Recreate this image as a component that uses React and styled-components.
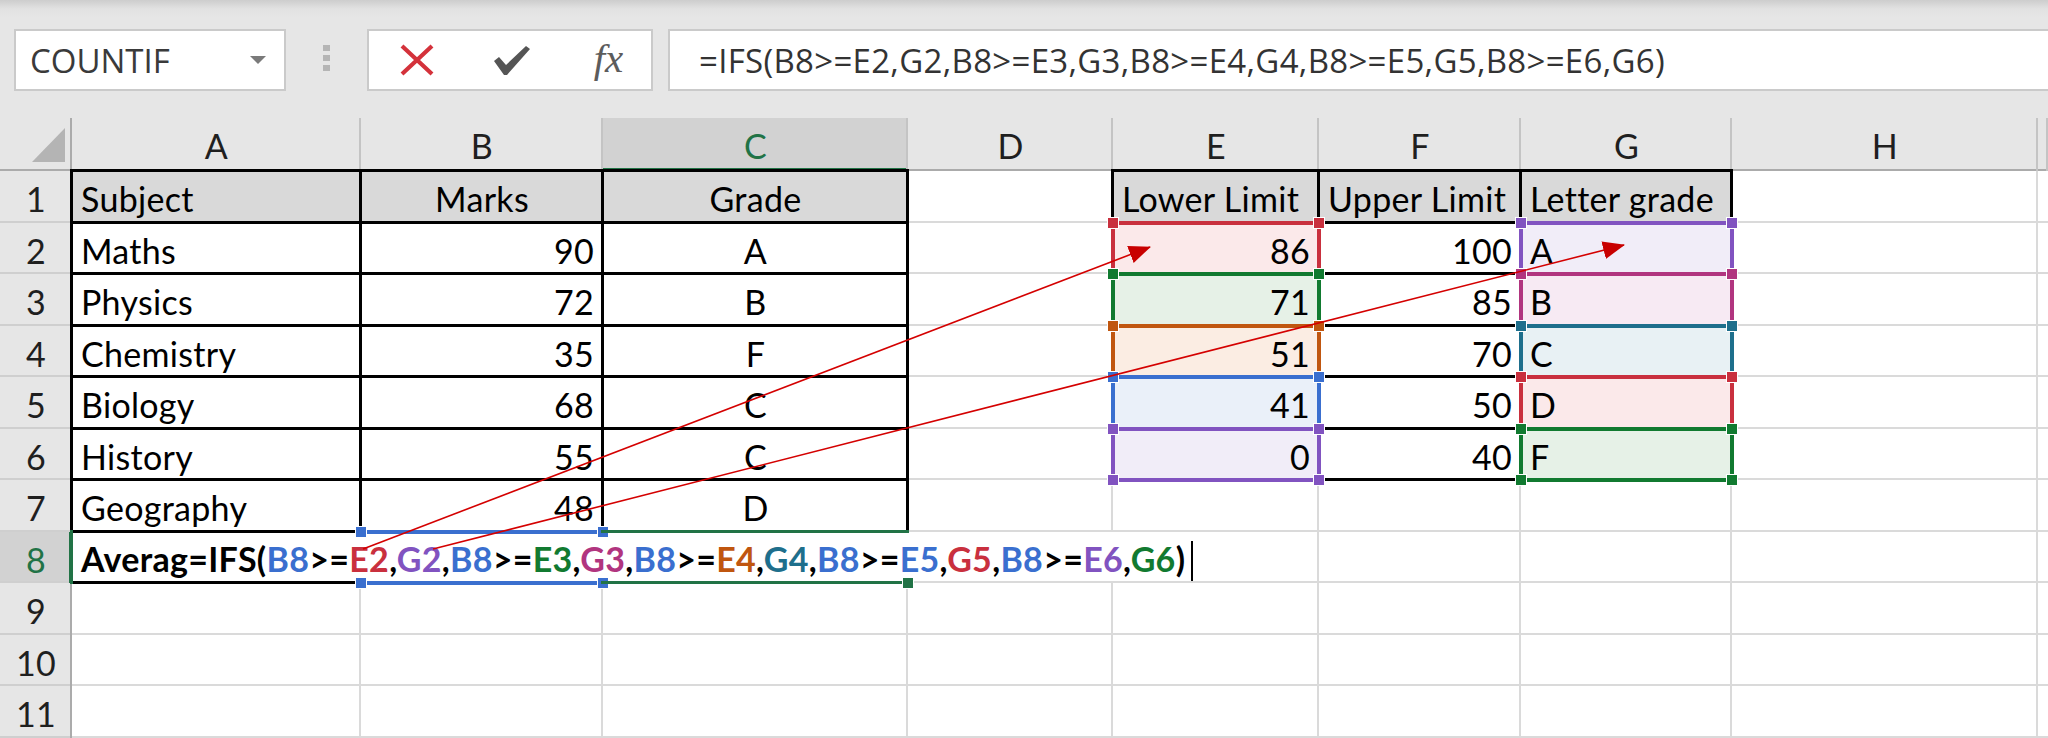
import React from 'react';
import styled, { createGlobalStyle } from 'styled-components';

const GlobalStyle = createGlobalStyle`
  html, body { margin: 0; padding: 0; background: #fff; }
  body { width: 2048px; height: 738px; overflow: hidden; font-family: Lato, "Liberation Sans", sans-serif; }
`;

const C = {
  blue: '#3a6fcf',
  red: '#c9303e',
  purple: '#8153c0',
  green: '#117a30',
  magenta: '#b1357f',
  orange: '#c0560f',
  teal: '#1e6f8c',
};
const TINT = {
  red: '#fbe9ea',
  green: '#e6f1e7',
  orange: '#fbede3',
  blue: '#eaf0f9',
  purple: '#f1edf8',
  magenta: '#f7eaf3',
  teal: '#e8f1f4',
};
const XL_GREEN = '#217346';

const Page = styled.div`
  width: 2048px;
  height: 738px;
  display: flex;
  flex-direction: column;
  overflow: hidden;
  background: #fff;
`;

const Toolbar = styled.div`
  height: 118px;
  flex: none;
  box-sizing: border-box;
  display: flex;
  align-items: flex-start;
  padding: 29px 0 0 14px;
  background: linear-gradient(#cdcdcd 0px, #e2e2e2 9px, #e6e6e6 18px);
  font-family: "Open Sans", "Noto Sans", sans-serif;
`;

const Field = styled.div`
  height: 62px;
  box-sizing: border-box;
  background: #fff;
  border: 2px solid #cacaca;
  display: flex;
  align-items: center;
`;

const NameBox = styled(Field)`
  width: 272px;
  padding: 0 18px 0 14px;
  justify-content: space-between;
  font-size: 33px;
  color: #3a3a3a;
`;

const Caret = styled.span`
  width: 0;
  height: 0;
  border-left: 8px solid transparent;
  border-right: 8px solid transparent;
  border-top: 8px solid #7a7a7a;
`;

const Grip = styled.div`
  margin: 16px 37px 0;
  display: flex;
  flex-direction: column;
  gap: 4px;
`;

const GripDot = styled.span`
  width: 7px;
  height: 6px;
  background: #b5b5b5;
`;

const ActionBox = styled(Field)`
  width: 286px;
  display: grid;
  grid-template-columns: repeat(3, 95px);
  justify-items: center;
  align-items: center;
`;

const Fx = styled.span`
  font-family: "Liberation Serif", serif;
  font-style: italic;
  font-size: 41px;
  color: #5c5c5c;
  line-height: 1;
  margin-top: -4px;
  margin-left: 4px;
`;

const FormulaBox = styled(Field)`
  flex: 1;
  margin-left: 15px;
  margin-right: -10px;
  padding-left: 29px;
  font-size: 33px;
  letter-spacing: 0.3px;
  color: #333;
  white-space: nowrap;
`;

const Sheet = styled.div`
  position: relative;
  isolation: isolate;
  flex: 1;
  display: grid;
  grid-template-columns: 72px 289px 242px 305px 205px 206px 202px 211px 306px 10px;
  grid-template-rows: 53px 52px 51px 52px 51px 52px 51px 52px 51px 52px 51px 52px;
  font-family: Lato, "Liberation Sans", sans-serif;
  font-size: 34px;
  letter-spacing: 0.3px;
  color: #000;
`;

const Corner = styled.div`
  background: #e6e6e6;
  box-shadow: inset -2px -2px 0 #ababab;
  display: flex;
  align-items: flex-end;
  justify-content: flex-end;
  padding: 0 7px 9px 0;
`;

const CornerTri = styled.span`
  width: 33px;
  height: 34px;
  background: #b4b4b4;
  clip-path: polygon(100% 0, 100% 100%, 0 100%);
`;

const ColHead = styled.div`
  background: ${p => (p.$sel ? '#d2d2d2' : '#e6e6e6')};
  color: ${p => (p.$sel ? XL_GREEN : '#1f1f1f')};
  display: flex;
  align-items: center;
  justify-content: center;
  padding-top: 2px;
  box-shadow: inset -2px 0 0 #c4c4c4,
    ${p => (p.$sel ? `inset 0 -3px 0 ${XL_GREEN}` : 'inset 0 -2px 0 #ababab')};
`;

const RowHead = styled.div`
  background: ${p => (p.$sel ? '#d2d2d2' : '#e6e6e6')};
  color: ${p => (p.$sel ? XL_GREEN : '#1f1f1f')};
  display: flex;
  align-items: center;
  justify-content: center;
  padding-top: 3px;
  box-shadow: ${p => (p.$sel ? `inset -3px 0 0 ${XL_GREEN}` : 'inset -2px 0 0 #ababab')},
    inset 0 -2px 0 #cfcfcf;
`;

const JUSTIFY = { left: 'flex-start', right: 'flex-end', center: 'center' };

const Cell = styled.div`
  position: relative;
  display: flex;
  align-items: center;
  justify-content: ${p => JUSTIFY[p.$align || 'left']};
  padding: 3px 9px 0;
  background: ${p => (p.$fill ? '#d9d9d9' : 'transparent')};
  box-shadow: ${p => (p.$spill ? 'inset 0 -2px 0 #dadada' : 'inset -2px -2px 0 #dadada')};
  white-space: nowrap;
  font-weight: ${p => (p.$bold ? 700 : 400)};
`;

const Txt = styled.span`
  position: relative;
  z-index: 3;
`;

const sideWidths = (sides, w) =>
  ['t', 'r', 'b', 'l'].map(s => (sides.includes(s) ? `${w}px` : '0')).join(' ');

const Frame = styled.span`
  position: absolute;
  top: -2px;
  left: -2px;
  right: -1px;
  bottom: -1px;
  border-style: solid;
  border-color: ${p => p.$c};
  border-width: ${p => sideWidths(p.$sides, p.$w || 3)};
  z-index: ${p => p.$z || 1};
  pointer-events: none;
`;

const RefBox = styled.span`
  position: absolute;
  top: -2px;
  left: -2px;
  right: -2px;
  bottom: -2px;
  border-style: solid;
  border-color: ${p => p.$c};
  border-width: ${p => sideWidths(p.$sides, 4)};
  background: ${p => p.$tint || 'transparent'};
  z-index: 2;
  pointer-events: none;
`;

const Handle = styled.span`
  position: absolute;
  width: 10px;
  height: 10px;
  background: ${p => p.$c};
  border: 1px solid #fff;
  ${p => p.$v}: ${p => p.$off}px;
  ${p => p.$h}: ${p => p.$hoff}px;
`;

const FillHandle = styled.span`
  position: absolute;
  right: -6px;
  bottom: -6px;
  width: 10px;
  height: 10px;
  background: ${XL_GREEN};
  border: 1px solid #fff;
  z-index: 2;
`;

const Ref = styled.span`
  color: ${p => p.$c};
`;

const Cursor = styled.span`
  display: inline-block;
  width: 2px;
  height: 40px;
  background: #000;
  margin-left: 6px;
  vertical-align: -9px;
`;

const Overlay = styled.svg`
  position: absolute;
  left: 0;
  top: 0;
  z-index: 4;
  pointer-events: none;
`;

function RefRange({ color, tint, sides = 'trbl' }) {
  const c = C[color];
  const voff = -8;
  const hoff = sides.includes('l') ? -8 : -4;
  return (
    <RefBox $c={c} $sides={sides} $tint={tint ? TINT[color] : null}>
      <Handle $c={c} $v="top" $h="left" $off={voff} $hoff={hoff} />
      <Handle $c={c} $v="top" $h="right" $off={voff} $hoff={hoff} />
      <Handle $c={c} $v="bottom" $h="left" $off={voff} $hoff={hoff} />
      <Handle $c={c} $v="bottom" $h="right" $off={voff} $hoff={hoff} />
    </RefBox>
  );
}

const COLS = ['A', 'B', 'C', 'D', 'E', 'F', 'G', 'H', 'I'];
const subjects = [
  ['Maths', 90, 'A'],
  ['Physics', 72, 'B'],
  ['Chemistry', 35, 'F'],
  ['Biology', 68, 'C'],
  ['History', 55, 'C'],
  ['Geography', 48, 'D'],
];
const limits = [
  [86, 100, 'A'],
  [71, 85, 'B'],
  [51, 70, 'C'],
  [41, 50, 'D'],
  [0, 40, 'F'],
];
const eColors = ['red', 'green', 'orange', 'blue', 'purple'];
const gColors = ['purple', 'magenta', 'teal', 'red', 'green'];

const BLACK = '#000';

function formulaSegments() {
  const segs = [{ t: 'Averag=IFS(', c: null }];
  for (let i = 0; i < 5; i++) {
    segs.push({ t: 'B8', c: 'blue' });
    segs.push({ t: '>=', c: null });
    segs.push({ t: `E${i + 2}`, c: eColors[i] });
    segs.push({ t: ',', c: null });
    segs.push({ t: `G${i + 2}`, c: gColors[i] });
    segs.push({ t: i < 4 ? ',' : ')', c: null });
  }
  return segs;
}

function buildRow(r) {
  const cells = COLS.map(() => ({}));
  const boxed = { frame: 'trbl' };
  if (r === 1) {
    cells[0] = { text: 'Subject', fill: true, ...boxed };
    cells[1] = { text: 'Marks', align: 'center', fill: true, ...boxed };
    cells[2] = { text: 'Grade', align: 'center', fill: true, ...boxed };
    cells[4] = { text: 'Lower Limit', fill: true, ...boxed };
    cells[5] = { text: 'Upper Limit', fill: true, ...boxed };
    cells[6] = { text: 'Letter grade', fill: true, ...boxed };
  } else if (r >= 2 && r <= 7) {
    const [s, m, g] = subjects[r - 2];
    cells[0] = { text: s, ...boxed };
    cells[1] = { text: String(m), align: 'right', ...boxed };
    cells[2] = { text: g, align: 'center', ...boxed };
    if (r <= 6) {
      const [lo, hi, lg] = limits[r - 2];
      cells[4] = { text: String(lo), align: 'right', ...boxed, ref: eColors[r - 2] };
      cells[5] = { text: String(hi), align: 'right', ...boxed };
      cells[6] = { text: lg, ...boxed, ref: gColors[r - 2] };
    }
  } else if (r === 8) {
    cells[0] = { formula: true, frame: 'tb', active: 'l', spill: true, bold: true };
    cells[1] = { ref: 'blue', noTint: true, refSides: 'tb', spill: true };
    cells[2] = { active: 'tb', fillHandle: true, spill: true };
    cells[3] = { spill: true };
  }
  return cells;
}

function SheetCell({ d }) {
  return (
    <Cell $align={d.align} $fill={d.fill} $spill={d.spill} $bold={d.bold}>
      {d.frame && <Frame $c={BLACK} $sides={d.frame} />}
      {d.active && <Frame $c={XL_GREEN} $sides={d.active} $z={2} />}
      {d.ref && <RefRange color={d.ref} tint={!d.noTint} sides={d.refSides} />}
      {d.fillHandle && <FillHandle />}
      {d.text && <Txt>{d.text}</Txt>}
      {d.formula && (
        <Txt>
          {formulaSegments().map((s, i) =>
            s.c ? (
              <Ref key={i} $c={C[s.c]}>
                {s.t}
              </Ref>
            ) : (
              <React.Fragment key={i}>{s.t}</React.Fragment>
            )
          )}
          <Cursor />
        </Txt>
      )}
    </Cell>
  );
}

function XIcon() {
  return (
    <svg width="36" height="32" viewBox="0 0 36 32">
      <path d="M3 2 L33 30 M33 2 L3 30" stroke="#d4323b" strokeWidth="4.2" strokeLinecap="butt" fill="none" />
    </svg>
  );
}

function CheckIcon() {
  return (
    <svg width="38" height="32" viewBox="0 0 38 32">
      <path d="M1 17 L6 13 L13 21 L33 2 L37 5 L14 31 L11 31 Z" fill="#555" />
    </svg>
  );
}

export default function App() {
  const rows = Array.from({ length: 11 }, (_, i) => i + 1);
  return (
    <Page>
      <GlobalStyle />
      <Toolbar>
        <NameBox>
          <span>COUNTIF</span>
          <Caret />
        </NameBox>
        <Grip>
          <GripDot />
          <GripDot />
          <GripDot />
        </Grip>
        <ActionBox>
          <XIcon />
          <CheckIcon />
          <Fx>fx</Fx>
        </ActionBox>
        <FormulaBox>=IFS(B8&gt;=E2,G2,B8&gt;=E3,G3,B8&gt;=E4,G4,B8&gt;=E5,G5,B8&gt;=E6,G6)</FormulaBox>
      </Toolbar>
      <Sheet>
        <Corner>
          <CornerTri />
        </Corner>
        {COLS.map(c => (
          <ColHead key={c} $sel={c === 'C'}>
            {c === 'I' ? '' : c}
          </ColHead>
        ))}
        {rows.map(r => (
          <React.Fragment key={r}>
            <RowHead $sel={r === 8}>{r}</RowHead>
            {buildRow(r).map((d, i) => (
              <SheetCell key={i} d={d} />
            ))}
          </React.Fragment>
        ))}
        <Overlay width="2048" height="620" viewBox="0 0 2048 620">
          <defs>
            <marker id="ah" markerUnits="userSpaceOnUse" markerWidth="22" markerHeight="18" refX="21" refY="9" orient="auto">
              <path d="M0 0 L22 9 L0 18 Z" fill="#c80000" />
            </marker>
          </defs>
          <line x1="363" y1="431" x2="1150" y2="129" stroke="#d40000" strokeWidth="1.6" markerEnd="url(#ah)" />
          <line x1="433" y1="431" x2="1624" y2="127" stroke="#d40000" strokeWidth="1.6" markerEnd="url(#ah)" />
        </Overlay>
      </Sheet>
    </Page>
  );
}
